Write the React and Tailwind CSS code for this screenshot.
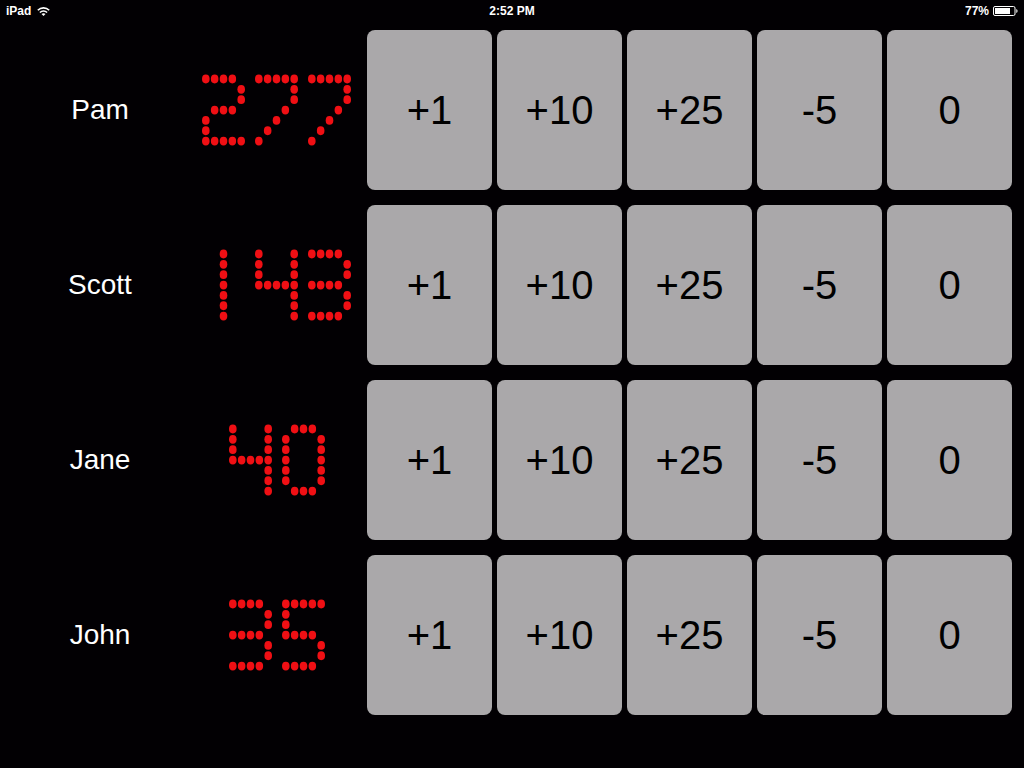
import React, { useState } from 'react';

const PLAYERS = [
    { name: 'Pam', score: 277 },
    { name: 'Scott', score: 143 },
    { name: 'Jane', score: 40 },
    { name: 'John', score: 35 }
];

const STEPS = [1, 10, 25, -5];

// 5x7 dot matrix glyphs
const GLYPHS = {
    0: ['.###.', '#...#', '#...#', '#...#', '#...#', '#...#', '.###.'],
    1: ['..#..', '..#..', '..#..', '..#..', '..#..', '..#..', '..#..'],
    2: ['####.', '....#', '....#', '.###.', '#....', '#....', '#####'],
    3: ['####.', '....#', '....#', '####.', '....#', '....#', '####.'],
    4: ['#...#', '#...#', '#...#', '#####', '....#', '....#', '....#'],
    5: ['#####', '#....', '#....', '####.', '....#', '....#', '####.'],
    6: ['.###.', '#....', '#....', '####.', '#...#', '#...#', '.###.'],
    7: ['#####', '....#', '....#', '...#.', '..#..', '.#...', '#....'],
    8: ['.###.', '#...#', '#...#', '.###.', '#...#', '#...#', '.###.'],
    9: ['.###.', '#...#', '#...#', '.####', '....#', '....#', '.###.'],
    '-': ['.....', '.....', '.....', '#####', '.....', '.....', '.....']
};

function Digit({ char }) {
    return (
        <svg viewBox="0 0 53 72" className="h-[72px] w-[53px] shrink-0 fill-[#f00f14]" aria-hidden="true">
            {GLYPHS[char].map((row, r) =>
                [...row].map((dot, c) =>
                    dot === '#' ? (
                        <ellipse key={`${r}-${c}`} cx={8.8 + c * 8.85} cy={5 + r * 10.35} rx="3.8" ry="4.4" />
                    ) : null
                )
            )}
        </svg>
    );
}

function StatusBar() {
    return (
        <header className="grid h-[22px] grid-cols-3 items-center px-[6px] font-bold text-xs">
            <div className="flex items-center gap-[6px]">
                <span>iPad</span>
                <svg viewBox="0 0 13 9" className="h-[9px] w-[13px]" fill="none" stroke="white" strokeWidth="1.6">
                    <path d="M0.8 3.3C4 0.1 9 0.1 12.2 3.3" />
                    <path d="M2.9 5.5C5 3.5 8 3.5 10.1 5.5" />
                    <path d="M4.5 7.1C5.7 6 7.3 6 8.5 7.1L6.5 9Z" fill="white" stroke="none" />
                </svg>
            </div>
            <span className="text-center">2:52 PM</span>
            <div className="flex items-center justify-end gap-1">
                <span>77%</span>
                <svg viewBox="0 0 25 10" className="h-[10px] w-[25px]">
                    <rect x="0.5" y="0.5" width="21.5" height="9" rx="1.5" fill="none" stroke="white" />
                    <rect x="2" y="2" width="15" height="6" fill="white" />
                    <path d="M23.3 3C25 3.6 25 6.4 23.3 7Z" fill="white" />
                </svg>
            </div>
        </header>
    );
}

function PlayerRow({ name, score, onChange }) {
    const buttonClass =
        'h-40 rounded-lg bg-[#aaa8aa] text-[40px] text-black hover:bg-[#b6b4b6] active:bg-[#8e8c8e]';

    return (
        <section className="flex items-center" aria-label={name}>
            <h2 className="w-[200px] shrink-0 text-center text-[28px]">{name}</h2>
            <div className="flex w-[153px] shrink-0 justify-center" role="img" aria-label={`Score ${score}`}>
                {[...String(score)].map((char, i) => (
                    <Digit key={i} char={char} />
                ))}
            </div>
            <div className="ml-[14px] grid flex-1 grid-cols-5 gap-[5px]">
                {STEPS.map((step) => (
                    <button key={step} type="button" className={buttonClass} onClick={() => onChange(score + step)}>
                        {step > 0 ? `+${step}` : step}
                    </button>
                ))}
                <button type="button" className={buttonClass} onClick={() => onChange(0)}>
                    0
                </button>
            </div>
        </section>
    );
}

function App() {
    const [players, setPlayers] = useState(PLAYERS);

    const setScore = (name, score) => {
        setPlayers(players.map((p) => (p.name === name ? { ...p, score } : p)));
    };

    return (
        <div className="min-h-screen bg-[#020003] font-['Liberation_Sans',Arial,sans-serif] text-white">
            <StatusBar />
            <main className="flex flex-col gap-[15px] pt-2 pr-3">
                {players.map((player) => (
                    <PlayerRow
                        key={player.name}
                        name={player.name}
                        score={player.score}
                        onChange={(score) => setScore(player.name, score)}
                    />
                ))}
            </main>
        </div>
    );
}

export default App;
